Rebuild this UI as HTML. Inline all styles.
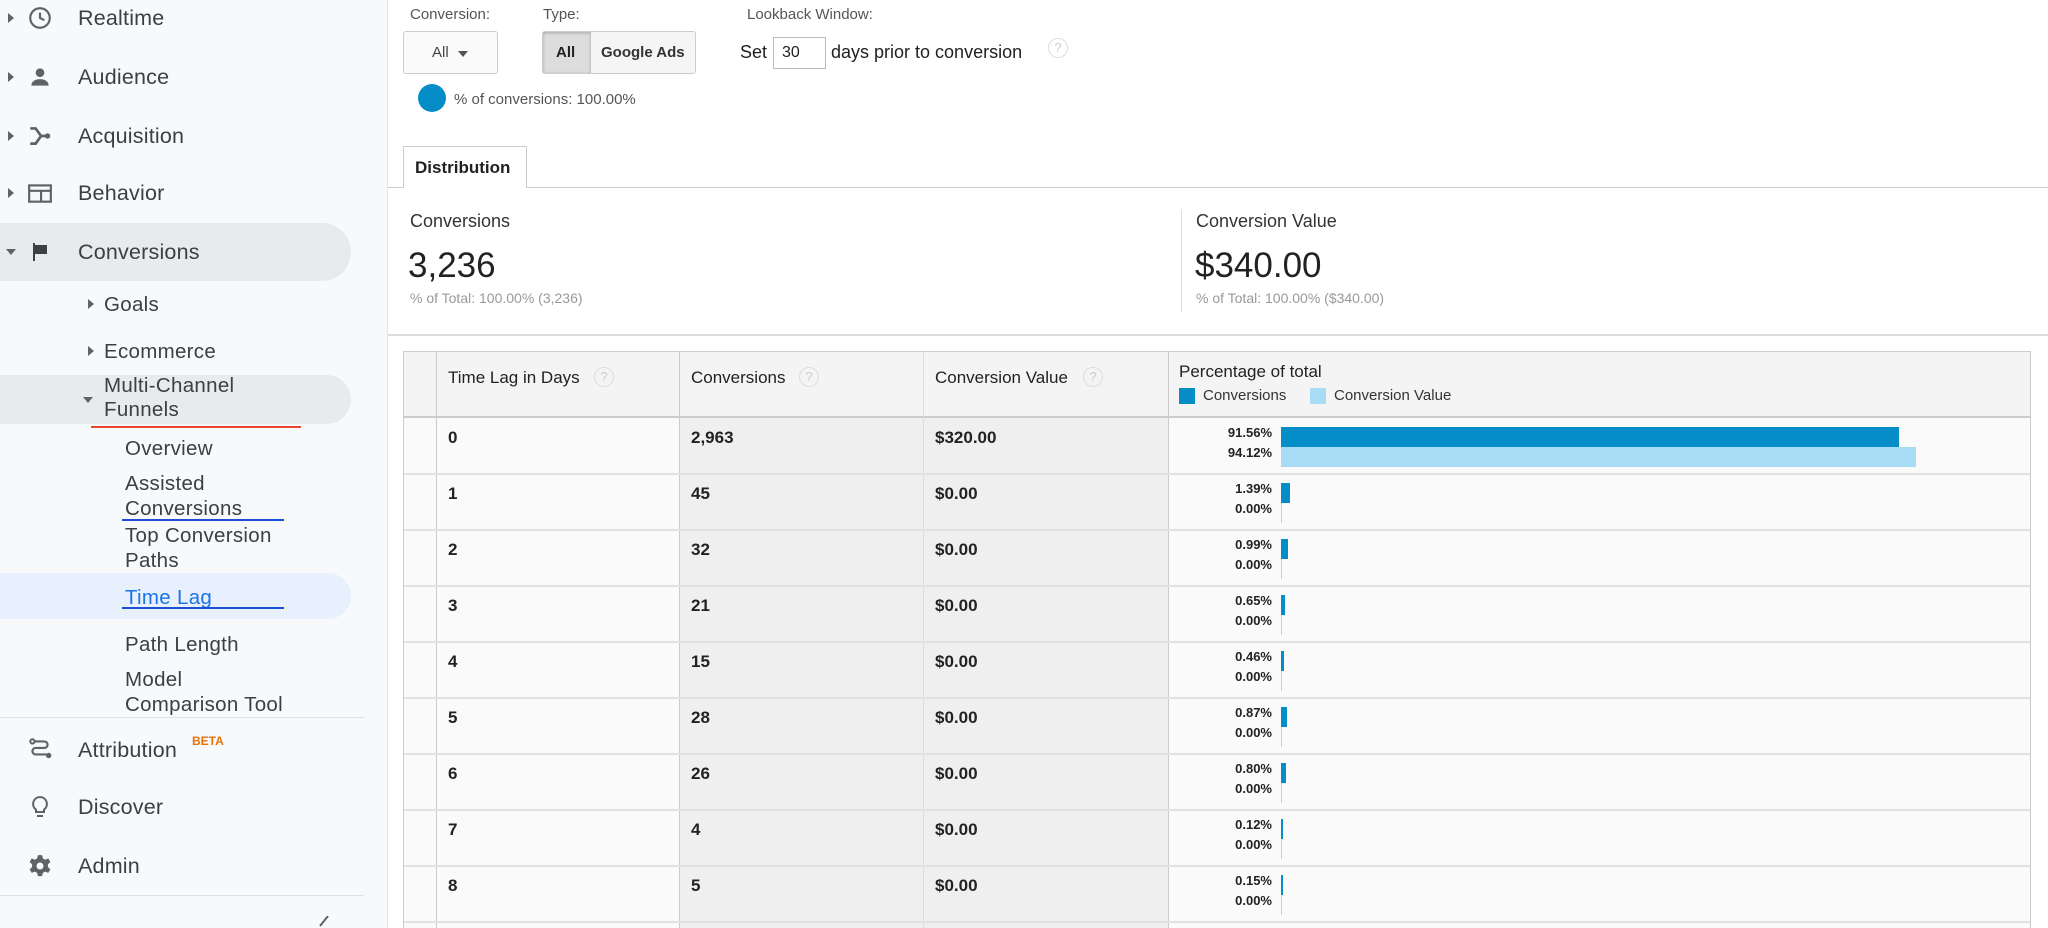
<!DOCTYPE html>
<html><head><meta charset="utf-8"><style>
*{margin:0;padding:0;box-sizing:border-box}
body{width:2048px;height:928px;overflow:hidden;background:#fff;font-family:"Liberation Sans",Arial,sans-serif;position:relative;color:#212121}
.a{position:absolute;white-space:nowrap}
#sb{position:absolute;left:0;top:0;width:388px;height:928px;background:#f8f9fa;border-right:1px solid #e8e8e8}
.nav{font-size:21.5px;color:#3c4043;line-height:24px;letter-spacing:0.2px}
.sub{font-size:20.5px;color:#3c4043;line-height:25px;letter-spacing:0.3px}
.tri{width:0;height:0;border-top:5px solid transparent;border-bottom:5px solid transparent;border-left:6px solid #5f6368}
.trid{width:0;height:0;border-left:5px solid transparent;border-right:5px solid transparent;border-top:6px solid #5f6368}
.lbl{font-size:15px;color:#555}
.q{width:20px;height:20px;border:1px solid #ddd;border-radius:50%;color:#ccc;font-size:13px;text-align:center;line-height:18px}
.cell{position:absolute;font-size:17px;font-weight:bold;color:#222}
.pct{position:absolute;font-size:13px;font-weight:bold;color:#222;text-align:right;width:80px}
</style></head><body>
<div id="sb">
 <div class="a tri" style="left:8px;top:13px"></div>
 <svg class="a" style="left:27px;top:5px" width="26" height="26" viewBox="0 0 24 24"><circle cx="12" cy="12" r="9" fill="none" stroke="#5f6368" stroke-width="2"/><path d="M12 7v5l4 2" fill="none" stroke="#5f6368" stroke-width="2"/></svg>
 <div class="a nav" style="left:78px;top:6px">Realtime</div>
 <div class="a tri" style="left:8px;top:72px"></div>
 <svg class="a" style="left:27px;top:64px" width="26" height="26" viewBox="0 0 24 24"><circle cx="12" cy="8" r="4" fill="#5f6368"/><path d="M4 20c0-4 4-6 8-6s8 2 8 6z" fill="#5f6368"/></svg>
 <div class="a nav" style="left:78px;top:65px">Audience</div>
 <div class="a tri" style="left:8px;top:131px"></div>
 <svg class="a" style="left:27px;top:123px" width="26" height="26" viewBox="0 0 24 24"><path d="M3 5h5l5 7h5M3 19h5l5-7" fill="none" stroke="#5f6368" stroke-width="2.5"/><circle cx="19" cy="12" r="2.5" fill="#5f6368"/></svg>
 <div class="a nav" style="left:78px;top:124px">Acquisition</div>
 <div class="a tri" style="left:8px;top:188px"></div>
 <svg class="a" style="left:27px;top:180px" width="26" height="26" viewBox="0 0 24 24"><rect x="2" y="5" width="20" height="15" fill="none" stroke="#5f6368" stroke-width="2"/><path d="M2 10h20M13 10v10" stroke="#5f6368" stroke-width="2"/></svg>
 <div class="a nav" style="left:78px;top:181px">Behavior</div>
 <div class="a" style="left:0;top:223px;width:351px;height:58px;background:#e8eaed;border-radius:0 29px 29px 0"></div>
 <div class="a trid" style="left:6px;top:249px"></div>
 <svg class="a" style="left:29px;top:240px" width="24" height="24" viewBox="0 0 24 24"><path d="M4 3h2v18H4zM6 5h12v9H6z" fill="#3c4043"/></svg>
 <div class="a nav" style="left:78px;top:240px">Conversions</div>
 <div class="a tri" style="left:88px;top:299px"></div>
 <div class="a sub" style="left:104px;top:292px">Goals</div>
 <div class="a tri" style="left:88px;top:346px"></div>
 <div class="a sub" style="left:104px;top:339px">Ecommerce</div>
 <div class="a" style="left:0;top:375px;width:351px;height:49px;background:#e8eaed;border-radius:0 25px 25px 0"></div>
 <div class="a trid" style="left:83px;top:397px"></div>
 <div class="a sub" style="left:104px;top:374px;line-height:24px">Multi-Channel<br>Funnels</div>
 <div class="a" style="left:91px;top:426px;width:210px;height:2px;background:#e8462f"></div>
 <div class="a sub" style="left:125px;top:436px">Overview</div>
 <div class="a sub" style="left:125px;top:471px;line-height:25px">Assisted<br>Conversions</div>
 <div class="a" style="left:122px;top:519px;width:162px;height:2px;background:#1a4fd6"></div>
 <div class="a sub" style="left:125px;top:523px;line-height:25px">Top Conversion<br>Paths</div>
 <div class="a" style="left:0;top:573px;width:351px;height:46px;background:#e8f0fe;border-radius:0 23px 23px 0"></div>
 <div class="a sub" style="left:125px;top:585px;color:#1a73e8">Time Lag</div>
 <div class="a" style="left:122px;top:607px;width:162px;height:2px;background:#1a4fd6"></div>
 <div class="a sub" style="left:125px;top:632px">Path Length</div>
 <div class="a sub" style="left:125px;top:667px;line-height:25px">Model<br>Comparison Tool</div>
 <div class="a" style="left:0;top:717px;width:364px;height:1px;background:#e0e0e0"></div>
 <svg class="a" style="left:27px;top:736px" width="26" height="26" viewBox="0 0 24 24"><circle cx="5" cy="5" r="2" fill="none" stroke="#5f6368" stroke-width="1.8"/><path d="M7 5h9a3 3 0 0 1 0 6H8a3 3 0 0 0 0 6h10" fill="none" stroke="#5f6368" stroke-width="2"/><circle cx="20" cy="18" r="2.5" fill="#5f6368"/></svg>
 <div class="a nav" style="left:78px;top:738px">Attribution</div>
 <div class="a" style="left:192px;top:734px;font-size:12px;font-weight:bold;color:#e8710a">BETA</div>
 <svg class="a" style="left:28px;top:794px" width="24" height="26" viewBox="0 0 24 26"><path d="M12 3a7 7 0 0 0-4 12.7V18h8v-2.3A7 7 0 0 0 12 3z" fill="none" stroke="#5f6368" stroke-width="2"/><path d="M9 22h6" stroke="#5f6368" stroke-width="2"/></svg>
 <div class="a nav" style="left:78px;top:795px">Discover</div>
 <svg class="a" style="left:27px;top:853px" width="26" height="26" viewBox="0 0 24 24"><path d="M10 2h4l.6 3 2.2 1.2 2.8-1.2 2 3.4-2.3 2v2.6l2.3 2-2 3.4-2.8-1.2-2.2 1.2-.6 3h-4l-.6-3-2.2-1.2-2.8 1.2-2-3.4 2.3-2v-2.6l-2.3-2 2-3.4 2.8 1.2L9.4 5z" fill="#5f6368"/><circle cx="12" cy="12" r="3.2" fill="#f8f9fa"/></svg>
 <div class="a nav" style="left:78px;top:854px">Admin</div>
 <div class="a" style="left:0;top:895px;width:364px;height:1px;background:#e0e0e0"></div>
 <svg class="a" style="left:316px;top:916px" width="16" height="12"><path d="M12 0L4 10" stroke="#5f6368" stroke-width="2"/></svg>
</div>

<div class="a lbl" style="left:410px;top:6px">Conversion:</div>
<div class="a lbl" style="left:543px;top:6px">Type:</div>
<div class="a lbl" style="left:747px;top:6px">Lookback Window:</div>
<div class="a" style="left:403px;top:31px;width:95px;height:43px;border:1px solid #ccc;border-radius:3px;background:#fafafa"></div>
<div class="a" style="left:432px;top:44px;font-size:15px;color:#444">All</div>
<div class="a trid" style="left:458px;top:51px;border-top-color:#555"></div>
<div class="a" style="left:542px;top:31px;width:154px;height:43px;border:1px solid #ccc;border-radius:3px;background:#f5f5f5"></div>
<div class="a" style="left:543px;top:32px;width:48px;height:41px;background:#ddd;box-shadow:inset 0 1px 3px rgba(0,0,0,.25)"></div>
<div class="a" style="left:556px;top:44px;font-size:15px;font-weight:bold">All</div>
<div class="a" style="left:601px;top:44px;font-size:15px;font-weight:bold;color:#333">Google Ads</div>
<div class="a" style="left:740px;top:42px;font-size:18px">Set</div>
<div class="a" style="left:773px;top:37px;width:53px;height:32px;border:1px solid #bbb;background:#fff"></div>
<div class="a" style="left:782px;top:44px;font-size:16px">30</div>
<div class="a" style="left:831px;top:42px;font-size:18px">days prior to conversion</div>
<div class="a q" style="left:1048px;top:38px">?</div>
<div class="a" style="left:418px;top:84px;width:28px;height:28px;border-radius:50%;background:#058dc7"></div>
<div class="a" style="left:454px;top:91px;font-size:15px;color:#555">% of conversions: 100.00%</div>

<div class="a" style="left:388px;top:187px;width:1660px;height:1px;background:#ccc"></div>
<div class="a" style="left:403px;top:146px;width:124px;height:42px;border:1px solid #ccc;border-bottom:none;background:#fff"></div>
<div class="a" style="left:415px;top:158px;font-size:17px;font-weight:bold">Distribution</div>

<div class="a" style="left:410px;top:211px;font-size:18px;color:#333">Conversions</div>
<div class="a" style="left:408px;top:246px;font-size:35px;color:#222">3,236</div>
<div class="a" style="left:410px;top:290px;font-size:14px;color:#999">% of Total: 100.00% (3,236)</div>
<div class="a" style="left:1181px;top:209px;width:1px;height:103px;background:#ddd"></div>
<div class="a" style="left:1196px;top:211px;font-size:18px;color:#333">Conversion Value</div>
<div class="a" style="left:1195px;top:246px;font-size:35px;color:#222">$340.00</div>
<div class="a" style="left:1196px;top:290px;font-size:14px;color:#999">% of Total: 100.00% ($340.00)</div>
<div class="a" style="left:388px;top:334px;width:1660px;height:2px;background:#ddd"></div>

<div class="a" style="left:403px;top:351px;width:1628px;height:577px;background:#fafafa;border:1px solid #ccc;border-bottom:none"></div>
<div class="a" style="left:404px;top:352px;width:1626px;height:66px;background:#f4f4f4;border-bottom:2px solid #ccc"></div>
<div class="a" style="left:679px;top:418px;width:489px;height:510px;background:#efefef"></div>
<div class="a" style="left:436px;top:352px;width:1px;height:576px;background:#ccc"></div>
<div class="a" style="left:679px;top:352px;width:1px;height:576px;background:#ccc"></div>
<div class="a" style="left:923px;top:352px;width:1px;height:576px;background:#ddd"></div>
<div class="a" style="left:1168px;top:352px;width:1px;height:576px;background:#ccc"></div>
<div class="a" style="left:448px;top:368px;font-size:17px;color:#222">Time Lag in Days</div>
<div class="a q" style="left:594px;top:367px">?</div>
<div class="a" style="left:691px;top:368px;font-size:17px;color:#222">Conversions</div>
<div class="a q" style="left:799px;top:367px">?</div>
<div class="a" style="left:935px;top:368px;font-size:17px;color:#222">Conversion Value</div>
<div class="a q" style="left:1083px;top:367px">?</div>
<div class="a" style="left:1179px;top:362px;font-size:17px;color:#222">Percentage of total</div>
<div class="a" style="left:1179px;top:388px;width:16px;height:16px;background:#058dc7"></div>
<div class="a" style="left:1203px;top:387px;font-size:15px;color:#333">Conversions</div>
<div class="a" style="left:1310px;top:388px;width:16px;height:16px;background:#a8dcf4"></div>
<div class="a" style="left:1334px;top:387px;font-size:15px;color:#333">Conversion Value</div>

<div id="rows"></div>
<script>
var d=[["0","2,963","$320.00","91.56%","94.12%",618,635],["1","45","$0.00","1.39%","0.00%",9,0],["2","32","$0.00","0.99%","0.00%",7,0],["3","21","$0.00","0.65%","0.00%",4,0],["4","15","$0.00","0.46%","0.00%",3,0],["5","28","$0.00","0.87%","0.00%",6,0],["6","26","$0.00","0.80%","0.00%",5,0],["7","4","$0.00","0.12%","0.00%",1,0],["8","5","$0.00","0.15%","0.00%",1,0]];
var h="";
for(var i=0;i<d.length;i++){var t=418+i*56;var r=d[i];
h+='<div class="a" style="left:404px;top:'+(t+55)+'px;width:1626px;height:2px;background:#e2e2e2"></div>';
h+='<div class="cell" style="left:448px;top:'+(t+10)+'px">'+r[0]+'</div>';
h+='<div class="cell" style="left:691px;top:'+(t+10)+'px">'+r[1]+'</div>';
h+='<div class="cell" style="left:935px;top:'+(t+10)+'px">'+r[2]+'</div>';
h+='<div class="pct" style="left:1192px;top:'+(t+7)+'px">'+r[3]+'</div>';
h+='<div class="pct" style="left:1192px;top:'+(t+27)+'px">'+r[4]+'</div>';
h+='<div class="a" style="left:1281px;top:'+(t+9)+'px;width:'+Math.max(r[5],2)+'px;height:20px;background:#058dc7"></div>';
h+='<div class="a" style="left:1281px;top:'+(t+29)+'px;width:'+Math.max(r[6],1)+'px;height:20px;background:#a8dcf4"></div>';}
document.getElementById("rows").innerHTML=h;
</script>
</body></html>
